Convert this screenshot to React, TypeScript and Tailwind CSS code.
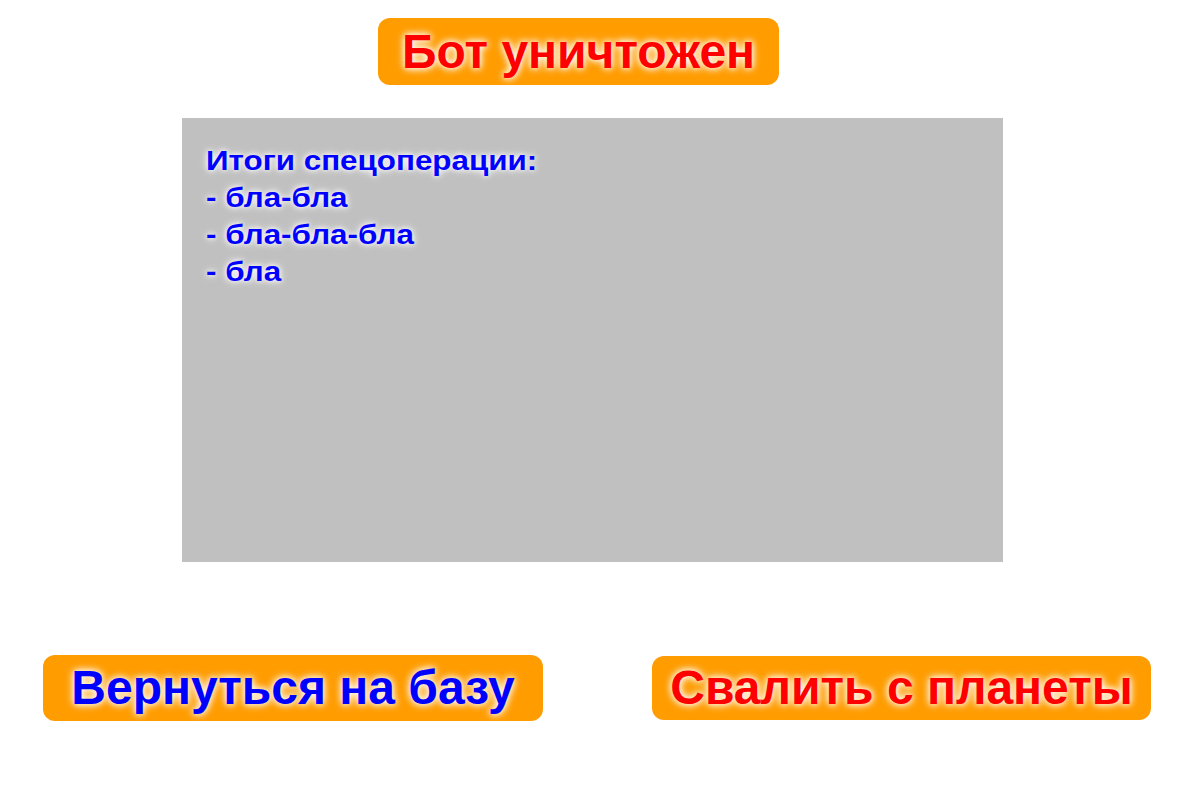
import React from "react";

const glow = "[text-shadow:0_0_6px_#ffffff,0_0_10px_#ffffff]";

export default function App() {
  return (
    <div className="w-[1200px] h-[800px] bg-white flex flex-col font-['Liberation_Sans',Arial,sans-serif] font-bold">
      <div className="ml-[378px] mt-[18px] w-[401px] h-[67px] rounded-[12px] bg-[#ff9c00] flex items-center justify-center">
        <span className={`text-[48px] leading-none text-[#ff0000] ${glow}`}>Бот уничтожен</span>
      </div>
      <div className="ml-[182px] mt-[33px] w-[821px] h-[444px] bg-[#c0c0c0] pl-[24px] pt-[24px]">
        <div className="text-[28px] leading-[37px] scale-x-[1.12] origin-top-left text-[#0000ff] [text-shadow:0_0_5px_#ffffff,0_0_8px_#ffffff]">
          <div>Итоги спецоперации:</div>
          <div>- бла-бла</div>
          <div>- бла-бла-бла</div>
          <div>- бла</div>
        </div>
      </div>
      <div className="mt-[93px] flex items-start">
        <div className="ml-[43px] w-[500px] h-[66px] rounded-[12px] bg-[#ff9c00] flex items-center justify-center">
          <span className={`text-[48px] leading-none text-[#0000ff] ${glow}`}>Вернуться на базу</span>
        </div>
        <div className="ml-[109px] mt-[1px] w-[499px] h-[64px] rounded-[12px] bg-[#ff9c00] flex items-center justify-center">
          <span className={`text-[48px] leading-none text-[#ff0000] ${glow}`}>Свалить с планеты</span>
        </div>
      </div>
    </div>
  );
}
